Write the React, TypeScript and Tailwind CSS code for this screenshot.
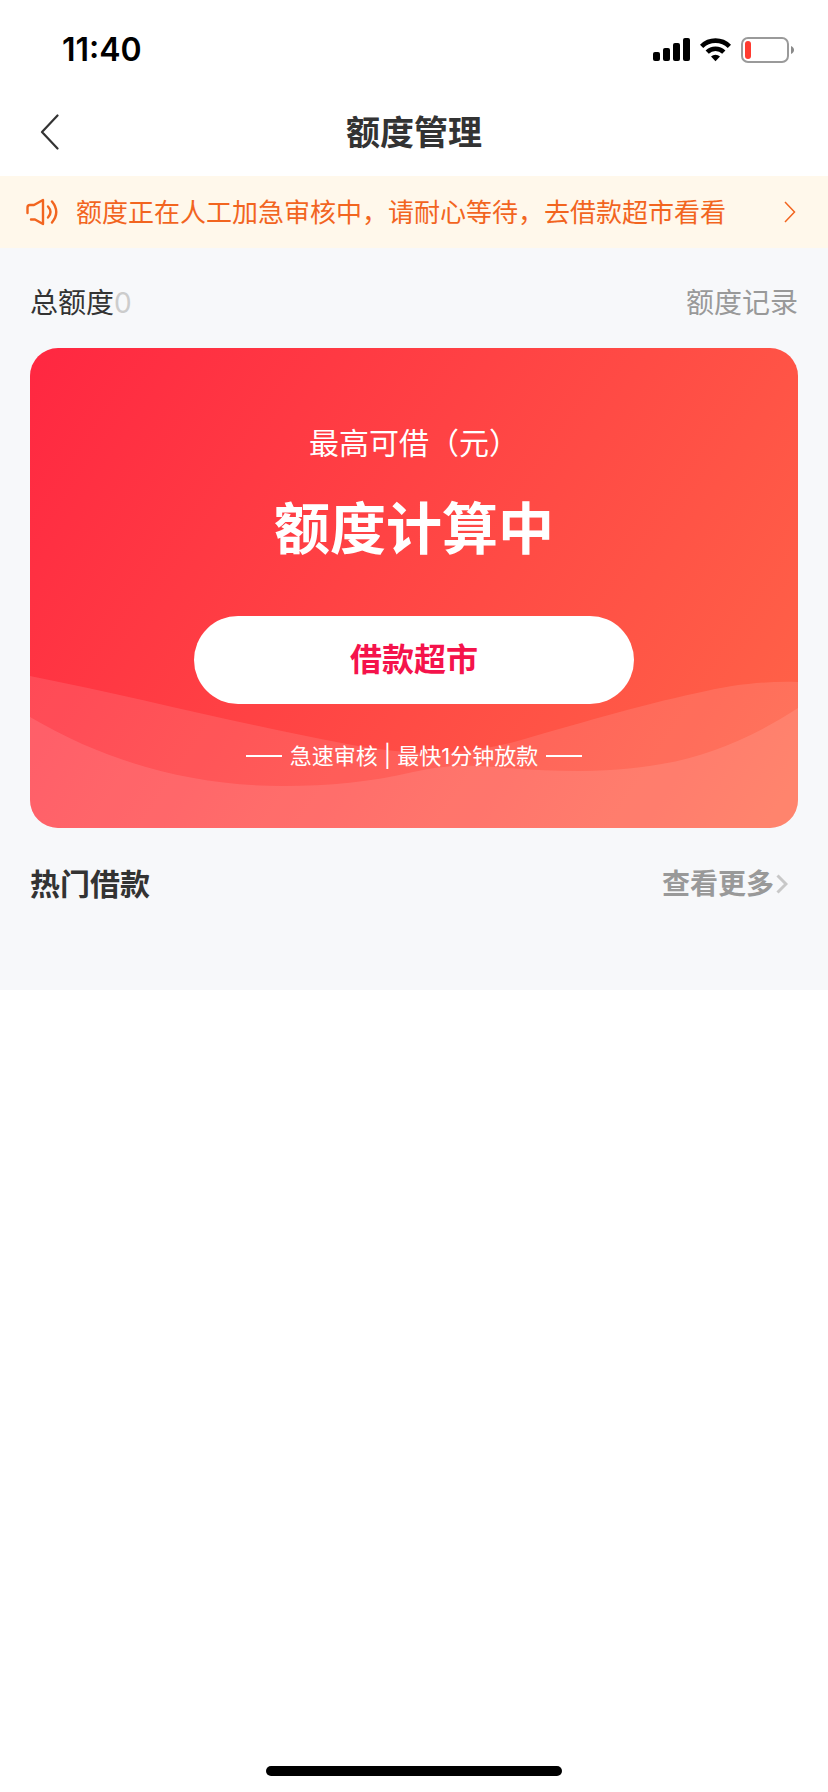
import React from 'react';

const StatusBar: React.FC = () => (
  <div className="flex h-[88px] items-center justify-between pt-3 pr-[34px] pl-[62px]">
    <span className="text-[32px] font-semibold text-black">11:40</span>
    <div className="flex items-center gap-[10px]">
      <svg width="37" height="24" viewBox="0 0 37 24" aria-label="信号">
        <rect x="0" y="14" width="7" height="9" rx="2" />
        <rect x="10" y="10" width="7" height="13" rx="2" />
        <rect x="20" y="5" width="7" height="18" rx="2" />
        <rect x="30" y="0" width="7" height="23" rx="2" />
      </svg>
      <svg width="31" height="24" viewBox="0 0 31 24" fill="none" stroke="#000" strokeWidth="4.6" aria-label="无线网络">
        <path d="M1.6 8.4a19.6 19.6 0 0 1 27.8 0" />
        <path d="M7.2 14.2a11.8 11.8 0 0 1 16.6 0" />
        <path d="M15.5 23.2l-4.5-4.6a6.6 6.6 0 0 1 9 0z" fill="#000" stroke="none" />
      </svg>
      <svg width="53" height="26" viewBox="0 0 53 26" aria-label="电量">
        <rect x="1" y="1" width="46" height="24" rx="6" fill="none" stroke="#9a9a9a" strokeWidth="2" />
        <rect x="4" y="4" width="6" height="18" rx="3" fill="#ff3b30" />
        <path d="M50 9c4 1.5 4 6.5 0 8z" fill="#8a8a8a" />
      </svg>
    </div>
  </div>
);

const Header: React.FC = () => (
  <header className="grid h-[88px] grid-cols-[1fr_auto_1fr] items-center px-10">
    <button type="button" aria-label="返回" className="flex w-10 py-2">
      <svg width="20" height="36" viewBox="0 0 20 36" fill="none" stroke="#333" strokeWidth="2.2" strokeLinecap="round" strokeLinejoin="round">
        <path d="M17.5 1.5L2 18l15.5 16.5" />
      </svg>
    </button>
    <h1 className="text-[34px] font-bold text-[#333]">额度管理</h1>
  </header>
);

const Notice: React.FC = () => (
  <a href="#market" className="flex h-[72px] items-center bg-[#fff8eb] pr-8 pl-[26px] text-[26px] text-[#f2651f]">
    <svg width="32" height="28" viewBox="0 0 32 28" fill="none" stroke="currentColor" strokeWidth="2.4" strokeLinecap="round" strokeLinejoin="round">
      <path d="M1.5 15V9.5Q1.5 7 4 7H8L17 2V26L9 21.5H5" />
      <path d="M22 8.5q5 5.5 0 11" />
      <path d="M26 3.5q8.5 10.5 0 21" />
    </svg>
    <span className="ml-[18px] flex-1">额度正在人工加急审核中，请耐心等待，去借款超市看看</span>
    <svg width="12" height="22" viewBox="0 0 12 22" fill="none" stroke="currentColor" strokeWidth="1.5">
      <path d="M1 1l9.5 10L1 21" />
    </svg>
  </a>
);

const QuotaCard: React.FC = () => (
  <section className="relative h-[480px] overflow-hidden rounded-[28px] bg-linear-[124deg,#ff2741,#ff6648] text-white">
    <svg className="absolute inset-0 h-full w-full" viewBox="0 0 768 480" preserveAspectRatio="none" fill="#fff" fillOpacity="0.11" aria-hidden="true">
      <path d="M0 328C110 350 210 376 317 396C380 408 430 408 484 394C540 378 610 357 667 345C705 336 735 333 768 334V480H0z" />
      <path d="M0 369C80 416 165 438 253 438C300 438 340 434 383 424C420 416 440 417 477 420C500 422 525 423 551 423C640 422 700 404 768 360V480H0z" />
    </svg>
    <div className="relative flex flex-col items-center pt-[72px]">
      <p className="text-[30px] leading-[46px]">最高可借（元）</p>
      <p className="mt-5 text-[56px] leading-[86px] font-bold">额度计算中</p>
      <button type="button" className="mt-11 h-[88px] w-[440px] rounded-full bg-white text-[32px] font-bold text-[#f5134b]">
        借款超市
      </button>
      <p className="mt-9 flex items-center gap-2 text-[22px] leading-8">
        <span className="h-[2px] w-9 bg-white" />
        急速审核 | 最快1分钟放款
        <span className="h-[2px] w-9 bg-white" />
      </p>
    </div>
  </section>
);

export default function App() {
  return (
    <div className="flex min-h-screen flex-col bg-white font-[Inter,'Noto_Sans_CJK_SC',sans-serif]">
      <StatusBar />
      <Header />
      <Notice />
      <main className="bg-[#f7f8fa] px-[30px] pb-[58px]">
        <div className="flex h-[100px] items-center justify-between pt-[10px] text-[28px]">
          <p className="text-[#333]">
            总额度<span className="text-[#ccc]">0</span>
          </p>
          <a href="#records" className="text-[#999]">额度记录</a>
        </div>
        <QuotaCard />
        <div className="flex h-[104px] items-center justify-between pt-2 pr-[10px] font-bold">
          <h2 className="text-[30px] text-[#333]">热门借款</h2>
          <a href="#more" className="flex items-center gap-[2px] text-[28px] text-[#999]">
            查看更多
            <svg width="12" height="20" viewBox="0 0 12 20" fill="none" stroke="#c8c8c8" strokeWidth="3">
              <path d="M1.5 1.5l8.5 8.5-8.5 8.5" />
            </svg>
          </a>
        </div>
      </main>
      <div className="mx-auto mt-auto mb-4 h-[10px] w-[296px] rounded-full bg-black" />
    </div>
  );
}
